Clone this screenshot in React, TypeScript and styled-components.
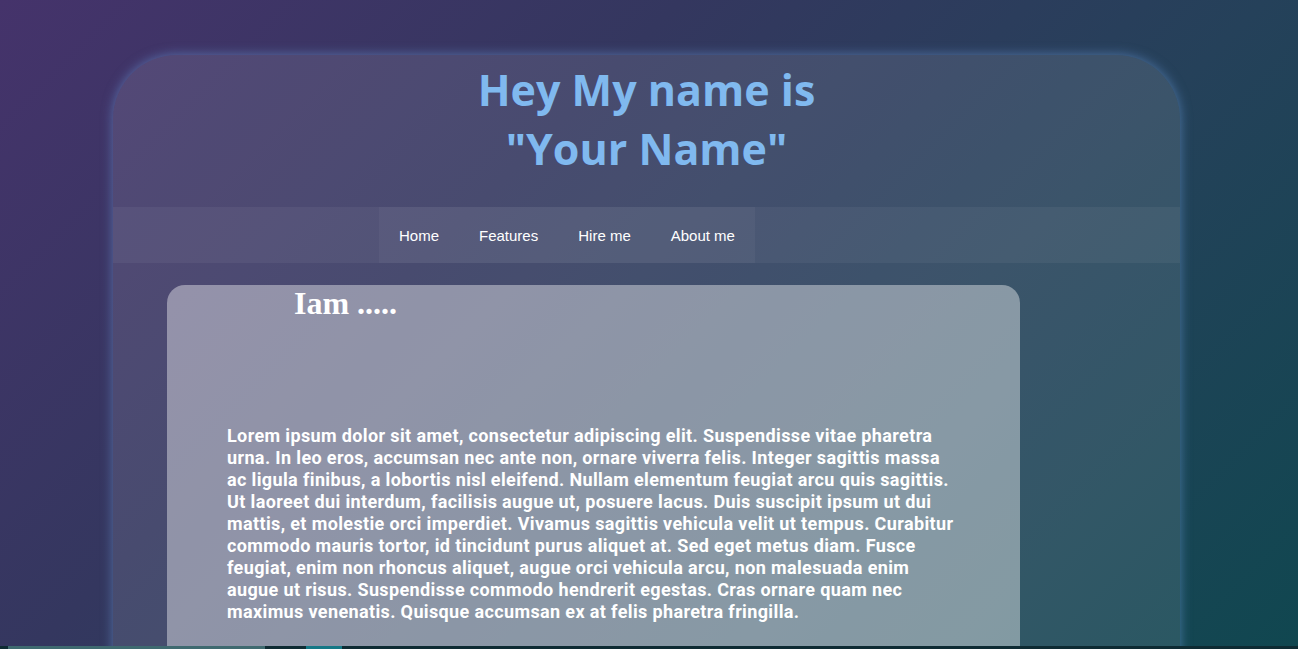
import React from "react";
import styled, { createGlobalStyle } from "styled-components";

const Global = createGlobalStyle`
  html, body { margin: 0; padding: 0; overflow: hidden; }
  body { background: #2f3a5e; }
`;

const Page = styled.div`
  height: 100vh;
  display: flex;
  flex-direction: column;
  background: linear-gradient(135deg, #45336b 0%, #34375f 35%, #25415a 65%, #104750 100%);
`;

const Stage = styled.div`
  flex: 1;
  overflow: hidden;
  padding: 55px 118px 0 113px;
`;

const Card = styled.div`
  height: 760px;
  border-radius: 64px 64px 0 0;
  background: rgba(255, 255, 255, 0.1);
  box-shadow: 0 0 12px rgba(110, 160, 225, 0.55);
  display: flex;
  flex-direction: column;
`;

const Title = styled.h1`
  margin: 5px 0 0;
  text-align: center;
  font-family: "Open Sans", "Noto Sans", sans-serif;
  font-weight: 700;
  font-size: 43px;
  line-height: 59px;
  color: #80b9ef;
`;

const NavBar = styled.nav`
  margin-top: 29px;
  height: 56px;
  background: rgba(255, 255, 255, 0.05);
  display: flex;
  padding-left: 266px;
`;

const NavList = styled.ul`
  margin: 0;
  padding: 0;
  list-style: none;
  display: flex;
  align-items: center;
  background: rgba(255, 255, 255, 0.04);
`;

const NavItem = styled.li`
  padding: 0 20px;
  font-family: "Liberation Sans", Arial, sans-serif;
  font-size: 15px;
  color: #ffffff;
`;

const Content = styled.section`
  margin: 22px 0 0 54px;
  width: 853px;
  flex: 1;
  border-radius: 18px 18px 0 0;
  background: rgba(255, 255, 255, 0.4);
`;

const Heading = styled.h2`
  margin: 0;
  padding-left: 127px;
  font-family: "Liberation Serif", "Times New Roman", serif;
  font-weight: 700;
  font-size: 32px;
  color: #ffffff;
`;

const Para = styled.p`
  margin: 103px 0 0;
  padding: 0 60px;
  font-family: Roboto, "Liberation Sans", sans-serif;
  font-weight: 700;
  font-size: 18px;
  letter-spacing: 0.37px;
  line-height: 22px;
  color: #ffffff;
`;

const Strip = styled.div`
  height: 3px;
  display: flex;
  background: #0e2b33;
`;

const Seg = styled.div<{ $w: number; $c: string }>`
  width: ${(p) => p.$w}px;
  background: ${(p) => p.$c};
`;

export default function App() {
  return (
    <>
      <Global />
      <Page>
        <Stage>
          <Card>
            <Title>
              Hey My name is
              <br />
              "Your Name"
            </Title>
            <NavBar>
              <NavList>
                <NavItem>Home</NavItem>
                <NavItem>Features</NavItem>
                <NavItem>Hire me</NavItem>
                <NavItem>About me</NavItem>
              </NavList>
            </NavBar>
            <Content>
              <Heading>Iam .....</Heading>
              <Para>
                Lorem ipsum dolor sit amet, consectetur adipiscing elit. Suspendisse vitae pharetra urna. In leo eros,
                accumsan nec ante non, ornare viverra felis. Integer sagittis massa ac ligula finibus, a lobortis nisl
                eleifend. Nullam elementum feugiat arcu quis sagittis. Ut laoreet dui interdum, facilisis augue ut,
                posuere lacus. Duis suscipit ipsum ut dui mattis, et molestie orci imperdiet. Vivamus sagittis vehicula
                velit ut tempus. Curabitur commodo mauris tortor, id tincidunt purus aliquet at. Sed eget metus diam.
                Fusce feugiat, enim non rhoncus aliquet, augue orci vehicula arcu, non malesuada enim augue ut risus.
                Suspendisse commodo hendrerit egestas. Cras ornare quam nec maximus venenatis. Quisque accumsan ex at
                felis pharetra fringilla.
              </Para>
            </Content>
          </Card>
        </Stage>
        <Strip>
          <Seg $w={8} $c="#0e2b33" />
          <Seg $w={257} $c="#3f6a70" />
          <Seg $w={41} $c="#0e2b33" />
          <Seg $w={36} $c="#157886" />
        </Strip>
      </Page>
    </>
  );
}
